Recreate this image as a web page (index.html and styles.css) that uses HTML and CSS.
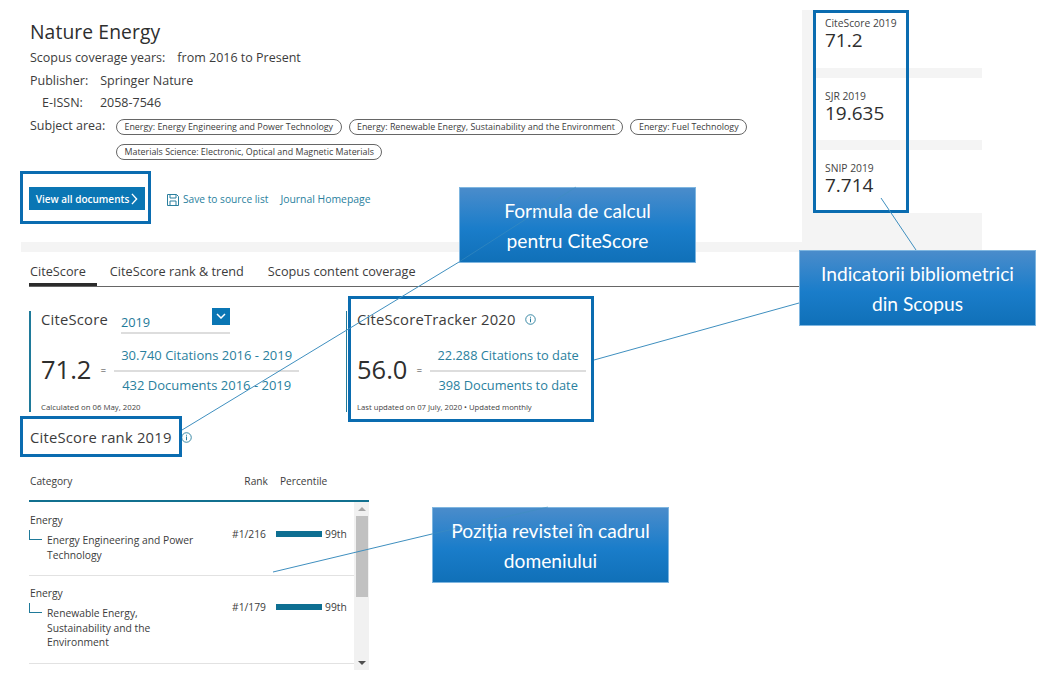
FILE: index.html
```html
<!DOCTYPE html>
<html lang="en">
<head>
<meta charset="utf-8">
<title>Nature Energy</title>
<link rel="stylesheet" href="styles.css">
</head>
<body>
<div class="page">
  <header class="top">
    <section class="journal">
      <h1 class="title">Nature Energy</h1>
      <p class="meta">Scopus coverage years:<span class="val">from 2016 to Present</span></p>
      <p class="meta">Publisher:<span class="val">Springer Nature</span></p>
      <p class="meta issn">E-ISSN:<span class="val">2058-7546</span></p>
      <div class="subjects">
        <span class="subject-label">Subject area:</span>
        <div class="chips">
          <span class="chip">Energy: Energy Engineering and Power Technology</span>
          <span class="chip">Energy: Renewable Energy, Sustainability and the Environment</span>
          <span class="chip">Energy: Fuel Technology</span>
          <span class="chip">Materials Science: Electronic, Optical and Magnetic Materials</span>
        </div>
      </div>
      <div class="actions">
        <a class="btn">View all documents<svg class="btn-chev" viewBox="0 0 8 14" width="7" height="12"><path d="M1 1l5.5 6L1 13" fill="none" stroke="#fff" stroke-width="1.6"/></svg></a>
        <a class="save"><svg class="save-icon" viewBox="0 0 12 12" width="12" height="12"><path d="M.5.5h9l2 2v9H.5z M3 .5v3.5h6V.5 M3 11.5V7h6v4.5" fill="none" stroke="#2a7f9e" stroke-width="1"/></svg>Save to source list</a>
        <a class="home">Journal Homepage</a>
      </div>
    </section>
    <aside class="metrics">
      <div class="metric metric-a"><div class="metric-label">CiteScore 2019</div><div class="metric-value">71.2</div></div>
      <div class="metric metric-b"><div class="metric-label">SJR 2019</div><div class="metric-value">19.635</div></div>
      <div class="metric metric-c"><div class="metric-label">SNIP 2019</div><div class="metric-value">7.714</div></div>
    </aside>
  </header>

  <main class="content">
    <nav class="tabs">
      <a class="tab active">CiteScore</a>
      <a class="tab">CiteScore rank &amp; trend</a>
      <a class="tab">Scopus content coverage</a>
    </nav>

    <div class="scores">
      <section class="score score-main">
        <div class="score-head">
          <span class="score-title">CiteScore</span>
          <div class="select"><span>2019</span><span class="select-btn"><svg viewBox="0 0 10 6" width="10" height="6"><path d="M1 1l4 4 4-4" fill="none" stroke="#fff" stroke-width="1.5"/></svg></span></div>
        </div>
        <div class="formula">
          <span class="big">71.2</span><span class="eq">=</span>
          <div class="fraction">
            <a class="num">30.740 Citations 2016 - 2019</a>
            <a class="den">432 Documents 2016 - 2019</a>
          </div>
        </div>
        <p class="note">Calculated on 06 May, 2020</p>
      </section>
      <section class="score score-track">
        <div class="score-head">
          <span class="score-title">CiteScoreTracker 2020</span>
          <svg class="info" viewBox="0 0 12 12" width="11" height="11"><circle cx="6" cy="6" r="5.2" fill="none" stroke="#2a7f9e"/><path d="M6 5v4M6 3v1" stroke="#2a7f9e" stroke-width="1.1"/></svg>
        </div>
        <div class="formula">
          <span class="big">56.0</span><span class="eq">=</span>
          <div class="fraction">
            <a class="num">22.288 Citations to date</a>
            <a class="den">398 Documents to date</a>
          </div>
        </div>
        <p class="note">Last updated on 07 July, 2020 • Updated monthly</p>
      </section>
    </div>

    <h2 class="rank-title">CiteScore rank 2019<svg class="info" viewBox="0 0 12 12" width="11" height="11"><circle cx="6" cy="6" r="5.2" fill="none" stroke="#2a7f9e"/><path d="M6 5v4M6 3v1" stroke="#2a7f9e" stroke-width="1.1"/></svg></h2>

    <div class="table">
      <div class="thead">
        <span>Category</span><span class="th-rank">Rank</span><span class="th-pct">Percentile</span>
      </div>
      <div class="tbody">
        <div class="rows">
          <div class="row">
            <div class="cat">
              <div class="cat-main">Energy</div>
              <div class="cat-sub">Energy Engineering and Power Technology</div>
            </div>
            <span class="rank">#1/216</span>
            <span class="bar"></span>
            <span class="pct">99th</span>
          </div>
          <div class="row">
            <div class="cat">
              <div class="cat-main">Energy</div>
              <div class="cat-sub">Renewable Energy, Sustainability and the Environment</div>
            </div>
            <span class="rank">#1/179</span>
            <span class="bar"></span>
            <span class="pct">99th</span>
          </div>
        </div>
        <div class="scrollbar">
          <svg class="arrow" viewBox="0 0 8 4" width="8" height="4"><path d="M0 4l4-4 4 4z" fill="#a5a5a5"/></svg>
          <div class="track"><div class="thumb"></div></div>
          <svg class="arrow" viewBox="0 0 8 4" width="8" height="4"><path d="M0 0l4 4 4-4z" fill="#505050"/></svg>
        </div>
      </div>
    </div>
  </main>

  <div class="box box-btn"></div>
  <div class="box box-metrics"></div>
  <div class="box box-track"></div>
  <div class="box box-rank"></div>

  <div class="callout c1">Formula de calcul<br>pentru CiteScore</div>
  <div class="callout c2">Indicatorii bibliometrici<br>din Scopus</div>
  <div class="callout c3">Poziția revistei în cadrul<br>domeniului</div>

  <svg class="lines" width="1055" height="679" viewBox="0 0 1055 679">
    <g class="ln">
      <line x1="182" y1="430" x2="459" y2="262"/>
      <line x1="594" y1="360" x2="799" y2="303"/>
      <line x1="881" y1="198" x2="916" y2="250"/>
      <line x1="273" y1="572" x2="432" y2="534"/>
    </g>
    <g class="ln-faint">
      <line x1="459" y1="262" x2="576" y2="187"/>
      <line x1="432" y1="534" x2="548" y2="507"/>
    </g>
  </svg>
</div>
</body>
</html>
```

FILE: styles.css
```css
* { box-sizing: border-box; }
html, body { margin: 0; padding: 0; background: #fff; }
body { font-family: "Open Sans", "Noto Sans", sans-serif; color: #3c3c3c; }
p, h1, h2 { margin: 0; font-weight: 400; }

.page { position: relative; width: 1055px; height: 679px; overflow: hidden; background: #fff; }

/* header */
.top { display: flex; width: 961px; margin-left: 21px; height: 252px; border-bottom: 10px solid #f4f4f4; }
.journal { width: 781px; padding: 17px 0 0 9px; }
.title { font-size: 19.3px; line-height: 30px; color: #2e2e2e; letter-spacing: .1px; }
.meta { font-size: 12.5px; line-height: 18px; margin-top: 4.5px; }
.meta:first-of-type { margin-top: 2px; }
.issn { padding-left: 12px; }
.val { margin-left: 12px; }
.issn .val { margin-left: 17px; }
.subjects { display: flex; margin-top: 5px; }
.subject-label { font-size: 12.5px; line-height: 18px; width: 86px; flex: none; }
.chips { display: flex; flex-wrap: wrap; column-gap: 7px; row-gap: 9px; padding-top: 2px; width: 640px; }
.chip { border: 1px solid #666; border-radius: 9px; height: 16px; line-height: 14px; font-size: 8.9px; padding: 0 7.5px; white-space: nowrap; }
.actions { display: flex; align-items: center; margin-top: 27px; margin-left: -1px; }
.btn { display: flex; align-items: center; justify-content: center; width: 116px; height: 23px; background: #0a76b4; color: #fff; font-size: 10px; font-weight: 600; gap: 2px; }
.save { display: flex; align-items: center; margin-left: 22px; font-size: 10.2px; color: #2a7f9e; }
.save-icon { margin-right: 4px; margin-top: 2px; }
.home { margin-left: 12px; font-size: 10.4px; color: #2a7f9e; margin-top: 1px; }

.metrics { width: 180px; margin-top: 10px; height: 232px; background: #f4f4f4; padding-left: 11px; display: flex; flex-direction: column; gap: 10px; }
.metric { background: #fff; padding: 7px 0 0 12px; }
.metric-a { height: 58px; }
.metric-b { height: 62px; padding-top: 12px; }
.metric-c { height: 63px; padding-top: 12px; }
.metric-label { font-size: 10.3px; line-height: 12px; color: #444; }
.metric-value { font-size: 19px; line-height: 22px; color: #2e2e2e; }

/* main */
.content { padding-left: 29px; }
.tabs { display: flex; width: 771px; height: 35px; border-bottom: 1px solid #666; }
.tab { font-size: 12.7px; line-height: 19px; color: #3c3c3c; padding: 10px 0 0 0; margin-right: 24px; white-space: nowrap; }
.tab.active { box-shadow: inset 0 -3px 0 #2b2b2b; padding: 10px 11px 0 1px; margin-right: 13px; }

.scores { display: flex; margin-top: 24px; height: 101px; }
.score { width: 317px; border-left: 2px solid #1f7a9a; padding: 0 0 0 10px; }
.score-track { border-left-width: 1px; }
.score-head { display: flex; align-items: center; height: 16px; }
.score-title { font-size: 14.8px; line-height: 16px; letter-spacing: .2px; color: #3c3c3c; white-space: nowrap; }
.select { display: flex; justify-content: space-between; width: 109px; height: 23px; margin-left: 13px; margin-top: 6px; font-size: 12.8px; line-height: 22px; color: #1f7a9a; border-bottom: 2px solid #ddd; }
.select-btn { display: flex; align-items: center; justify-content: center; width: 18px; height: 17px; background: #0a76b4; margin-top: -3px; }
.info { margin-left: 9px; flex: none; }
.formula { display: flex; align-items: center; margin-top: 19px; }
.big { font-size: 25.5px; line-height: 34px; margin-top: -2px; color: #2e2e2e; }
.eq { font-size: 10px; margin: 0 8px 0 9px; }
.fraction { display: flex; flex-direction: column; align-items: center; width: 185px; font-size: 13px; color: #2a7f9e; }
.score-track .fraction { width: 156px; font-size: 12.8px; }
.num { display: block; width: 100%; text-align: center; line-height: 18px; padding-bottom: 6px; border-bottom: 2px solid #ddd; white-space: nowrap; }
.den { display: block; line-height: 18px; padding-top: 4px; white-space: nowrap; }
.note { font-size: 7.8px; line-height: 12px; margin-top: 7px; white-space: nowrap; color: #444; }
.score-track .note { font-size: 7.7px; }

.rank-title { display: flex; align-items: center; margin-top: 15px; padding-left: 1px; font-size: 14.8px; line-height: 20px; color: #3c3c3c; letter-spacing: .2px; }

/* table */
.table { width: 340px; margin-top: 26px; }
.thead { display: flex; height: 29px; border-bottom: 2px solid #11708f; padding-left: 1px; font-size: 10.2px; line-height: 16px; }
.th-rank { margin-left: 172px; }
.th-pct { margin-left: 12px; }
.tbody { display: flex; height: 168px; }
.rows { width: 325px; flex: none; }
.row { display: grid; grid-template-columns: 203px 44px 49px 29px; height: 74px; border-bottom: 1px solid #e2e2e2; padding-top: 11px; font-size: 10.3px; }
.row + .row { padding-top: 10px; height: 88px; }
.cat-main { line-height: 14px; padding-left: 1px; }
.cat-sub { position: relative; margin: 6px 0 0 18px; line-height: 14.5px; width: 150px; }
.cat-sub::before { content: ""; position: absolute; left: -18px; top: -3px; width: 12px; height: 9px; border-left: 1px solid #1f7a9a; border-bottom: 1px solid #1f7a9a; }
.rank { line-height: 14px; margin-top: 14px; }
.bar { display: block; width: 46px; height: 6px; background: #0e6f92; margin-top: 18px; }
.pct { line-height: 14px; margin-top: 14px; }
.scrollbar { width: 15px; flex: none; background: #f1f1f1; display: flex; flex-direction: column; align-items: center; justify-content: space-between; padding: 5px 0; }
.track { flex: 1; width: 100%; padding: 5px 1px 0 2px; }
.thumb { height: 81px; background: #c1c1c1; }

/* annotations */
.box { position: absolute; border: 3px solid #0a6cb0; }
.box-btn { left: 20px; top: 171px; width: 131px; height: 53px; }
.box-metrics { left: 813px; top: 10px; width: 96px; height: 203px; }
.box-track { left: 348px; top: 296px; width: 246px; height: 126px; }
.box-rank { left: 20px; top: 416px; width: 162px; height: 41px; }

.callout { position: absolute; width: 237px; height: 76px; padding-top: 8px; text-align: center; color: #fff; font-family: "Lato", "Open Sans", sans-serif; font-size: 19.2px; line-height: 30px; background: linear-gradient(#4a8ccb, #1a7dca 55%, #1070b8); border: 1px solid #7fb6e0; }
.c1 { left: 459px; top: 187px; }
.c2 { left: 799px; top: 250px; }
.c3 { left: 432px; top: 507px; }

.lines { position: absolute; left: 0; top: 0; pointer-events: none; }
.ln line { stroke: #3f8fbf; stroke-width: 1; }
.ln-faint line { stroke: #3f8fbf; stroke-width: 1; opacity: .55; }
```
